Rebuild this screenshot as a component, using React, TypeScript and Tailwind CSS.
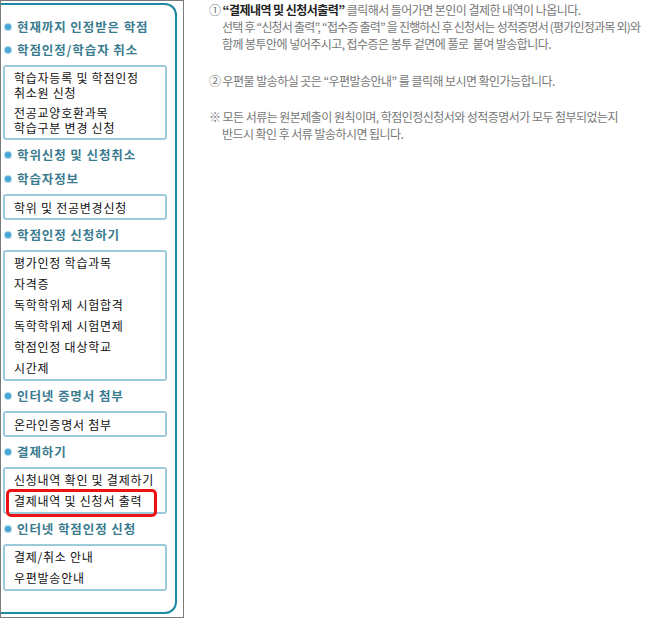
import React from "react";

const KR = { fontFamily: '"Noto Sans CJK KR", "Noto Sans", sans-serif' };

function Heading({ children, h = "h-[24px]" }: { children: React.ReactNode; h?: string }) {
  return (
    <div className={`flex items-center ${h}`}>
      <span className="ml-[4px] w-[6px] h-[6px] rounded-full bg-[#4aa6d6] ring-1 ring-[#a9d6ee]" />
      <span className="ml-[6px] text-[12.5px] tracking-[0.9px] font-bold text-[#3a7b8f] leading-none whitespace-nowrap">{children}</span>
    </div>
  );
}

function Box({ children, className = "" }: { children: React.ReactNode; className?: string }) {
  return (
    <div className={`ml-[2px] w-[164px] border-2 border-[#9ccadb] rounded-[3px] bg-white ${className}`}>{children}</div>
  );
}

function Item({ children }: { children: React.ReactNode }) {
  return (
    <div className="pl-[9px] h-[21px] leading-[21px] text-[12px] tracking-[0.75px] text-[#111] whitespace-nowrap">
      {children}
    </div>
  );
}

function Line({ children }: { children: React.ReactNode }) {
  return (
    <div className="pl-[9px] h-[15px] leading-[15px] text-[12px] tracking-[0.75px] text-[#111] whitespace-nowrap">
      {children}
    </div>
  );
}

export default function App() {
  return (
    <div className="flex bg-white w-[650px] h-[618px]" style={KR}>
      <div className="w-[184px] h-[618px] border border-[#7a7a7a] shrink-0">
        <div className="mt-[2px] w-[176px] h-[611px] border-t-2 border-r-2 border-b-2 border-[#1b8aa2] rounded-tr-[12px] rounded-br-[12px] pt-[11px]">
          <Heading h="h-[22px]">현재까지 인정받은 학점</Heading>
          <Heading>학점인정/학습자 취소</Heading>
          <Box className="mt-[3px] pt-[3px] pb-[3px] flex flex-col gap-[5px]">
            <div>
              <Line>학습자등록 및 학점인정</Line>
              <Line>취소원 신청</Line>
            </div>
            <div>
              <Line>전공교양호환과목</Line>
              <Line>학습구분 변경 신청</Line>
            </div>
          </Box>
          <div className="mt-[3px]">
            <Heading>학위신청 및 신청취소</Heading>
          </div>
          <Heading>학습자정보</Heading>
          <Box className="mt-[3px] pt-[1px]">
            <Item>학위 및 전공변경신청</Item>
          </Box>
          <div className="mt-[3px]">
            <Heading>학점인정 신청하기</Heading>
          </div>
          <Box className="mt-[3px] pb-[1px]">
            <Item>평가인정 학습과목</Item>
            <Item>자격증</Item>
            <Item>독학학위제 시험합격</Item>
            <Item>독학학위제 시험면제</Item>
            <Item>학점인정 대상학교</Item>
            <Item>시간제</Item>
          </Box>
          <div className="mt-[3px]">
            <Heading>인터넷 증명서 첨부</Heading>
          </div>
          <Box className="mt-[3px] pt-[1px]">
            <Item>온라인증명서 첨부</Item>
          </Box>
          <div className="mt-[3px]">
            <Heading>결제하기</Heading>
          </div>
          <Box className="mt-[3px] pb-[1px]">
            <Item>신청내역 확인 및 결제하기</Item>
            <div className="relative">
              <Item>결제내역 및 신청서 출력</Item>
              <div className="absolute left-[1px] right-[8px] top-[-1px] bottom-[-6px] border-[3px] border-[#ee1111] rounded-[5px]" />
            </div>
          </Box>
          <div className="mt-[3px]">
            <Heading>인터넷 학점인정 신청</Heading>
          </div>
          <Box className="mt-[3px] pb-[1px]">
            <Item>결제/취소 안내</Item>
            <Item>우편발송안내</Item>
          </Box>
        </div>
      </div>

      <div className="pl-[25px] pt-[1px] text-[12px] tracking-[-0.55px] leading-[17px] text-[#777] whitespace-nowrap">
        <div>
          ① <span className="font-bold text-[#222]">“결제내역 및 신청서출력”</span> 클릭해서 들어가면 본인이 결제한 내역이 나옵니다.
        </div>
        <div className="pl-[13px] tracking-[-0.8px]">선택 후 “신청서 출력”, “접수증 출력” 을 진행하신 후 신청서는 성적증명서 (평가인정과목 외)와</div>
        <div className="pl-[13px]">함께 봉투안에 넣어주시고, 접수증은 봉투 겉면에 풀로&nbsp; 붙여 발송합니다.</div>
        <div className="mt-[20px]">② 우편물 발송하실 곳은 “우편발송안내” 를 클릭해 보시면 확인가능합니다.</div>
        <div className="mt-[19px]">※ 모든 서류는 원본제출이 원칙이며, 학점인정신청서와 성적증명서가 모두 첨부되었는지</div>
        <div className="pl-[13px]">반드시 확인 후 서류 발송하시면 됩니다.</div>
      </div>
    </div>
  );
}
